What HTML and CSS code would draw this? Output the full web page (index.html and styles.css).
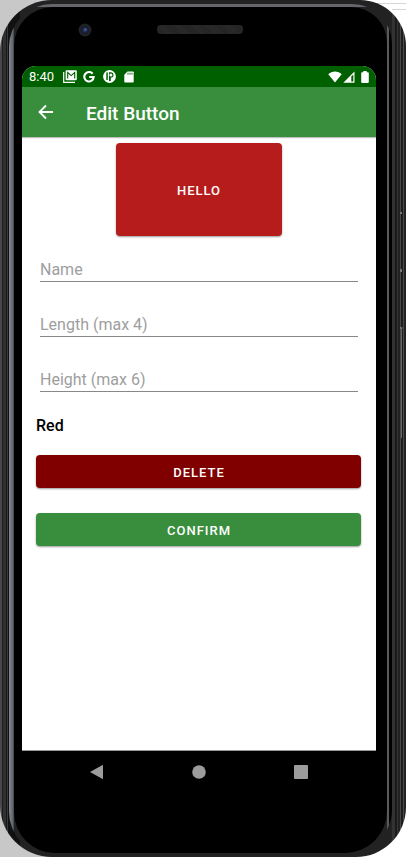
FILE: index.html
```html
<!DOCTYPE html>
<html lang="en">
<head>
<meta charset="utf-8">
<meta name="viewport" content="width=device-width, initial-scale=1">
<title>Edit Button</title>
<link rel="stylesheet" href="styles.css">
</head>
<body>
<div class="phone">
  <div class="rim">
    <div class="face">
      <div class="earpiece">
        <svg class="camera" viewBox="0 0 14 14" aria-hidden="true"><circle cx="7" cy="7" r="6.5" fill="#202226"/><circle cx="7" cy="7" r="4" fill="#161b30"/><circle cx="7" cy="7" r="2.5" fill="#26305c"/><circle cx="7.5" cy="6.5" r="1" fill="#5e6fae"/></svg>
        <span class="speaker"></span>
      </div>
      <div class="screen">
        <div class="status">
          <span class="clock">8:40</span>
          <svg class="gmail" viewBox="0 0 14 13" aria-hidden="true"><path d="M.700 2v10.300h11.300" fill="none" stroke="#fff" stroke-width="1.200"/><rect x="2.600" y="0.300" width="11.200" height="10" rx="1" fill="#fff"/><path d="M4.700 8.500V2.500L8.200 5.600 11.700 2.500v6" fill="none" stroke="#006000" stroke-width="1.100"/></svg>
          <svg class="google" viewBox="0 0 12 12" aria-hidden="true"><path d="M9.600 2.700A4.700 4.700 0 1 0 10.700 6H6.200" fill="none" stroke="#fff" stroke-width="2.100"/></svg>
          <svg class="pocket" viewBox="0 0 13 13" aria-hidden="true"><circle cx="6.500" cy="6.500" r="6.400" fill="#fff"/><path d="M3.300 2.500h1.500v7.500H3.300z" fill="#006000"/><path d="M6 2.300h1.800a2.700 2.700 0 0 1 0 5.400V11H6z" fill="#006000"/><circle cx="7.900" cy="5" r="1.500" fill="#fff"/></svg>
          <svg class="card-icon" viewBox="0 0 10 12" aria-hidden="true"><path d="M3.500.500H9a.7.7 0 0 1 .7.700v9.600a.7.7 0 0 1-.7.700H1a.7.7 0 0 1-.7-.7V3.700z" fill="#fff"/><path d="M4 1.700v2M6 1.700v2M8 1.700v2" stroke="#006000" stroke-width=".9"/></svg>
          <svg class="wifi" viewBox="0 0 14 12" aria-hidden="true"><path d="M.3 3.200C4-.5 10-.5 13.700 3.200L7 11.500z" fill="#fff"/></svg>
          <svg class="signal" viewBox="0 0 12 12" aria-hidden="true"><path d="M.3 11.700L11.500.500v11.200z" fill="#fff"/><path d="M8.300 5.500l2-2V10.500h-2z" fill="#006000"/></svg>
          <svg class="battery" viewBox="0 0 8 12" aria-hidden="true"><path d="M2.300 0h3.400v1.300H7a.8.8 0 0 1 .8.800v9a.8.8 0 0 1-.8.800H1a.8.8 0 0 1-.8-.8v-9a.8.8 0 0 1 .8-.8h1.300z" fill="#fff"/></svg>
        </div>
        <header class="toolbar">
          <button class="back" type="button" aria-label="Back"><svg viewBox="0 0 16 16" aria-hidden="true"><path d="M15 8H2M8 1.500L1.500 8 8 14.500" fill="none" stroke="#fff" stroke-width="1.800"/></svg></button>
          <h1>Edit Button</h1>
        </header>
        <main>
          <button class="btn preview" type="button">HELLO</button>
          <form>
            <input class="field" type="text" placeholder="Name" aria-label="Name">
            <input class="field" type="text" placeholder="Length (max 4)" aria-label="Length (max 4)">
            <input class="field" type="text" placeholder="Height (max 6)" aria-label="Height (max 6)">
            <p class="colour">Red</p>
            <button class="btn delete" type="button">DELETE</button>
            <button class="btn confirm" type="button">CONFIRM</button>
          </form>
        </main>
      </div>
      <nav class="navbar">
        <button type="button" aria-label="Back"><svg viewBox="0 0 14 16"><path d="M13 .800v14.400L0 8z" fill="#9c9c9c"/></svg></button>
        <button type="button" aria-label="Home"><svg viewBox="0 0 14 16"><circle cx="7" cy="8" r="6.800" fill="#9c9c9c"/></svg></button>
        <button type="button" aria-label="Recent apps"><svg viewBox="0 0 14 16"><rect y="1" width="14" height="14" rx="1" fill="#9c9c9c"/></svg></button>
      </nav>
    </div>
  </div>
</div>
</body>
</html>
```
FILE: styles.css
```css
* { box-sizing: border-box; }

body {
  margin: 0;
  font-family: Roboto, "Liberation Sans", sans-serif;
  background:
    linear-gradient(#d4d6dc, #d4d6dc) right 3px / 60px 1px no-repeat,
    linear-gradient(#d4d6dc, #d4d6dc) right 9px / 14px 1px no-repeat,
    linear-gradient(90deg, #c8c8c8 50%, #fff 50%);
}

button, input { font-family: inherit; }

.phone {
  display: flex;
  min-height: 100vh;
  padding: 4px 14px 2px 9px;
  border-radius: 52px 46px 50px 52px;
  background:
    linear-gradient(90deg, #8a8a8a, #333) right 3px top 327px / 3px 2px no-repeat,
    linear-gradient(#666, #666) right 4px top 328px / 1px 110px no-repeat,
    linear-gradient(#777, #777) right 4px top 212px / 2px 2px no-repeat,
    linear-gradient(#777, #777) right 4px top 269px / 2px 3px no-repeat,
    linear-gradient(90deg, #484848 2px, #1d1d1d 2px 3px, #303030 3px 6px, #171717 6px 7px, #3a3a3a 7px 8px, #111 8px 20px, transparent 20px),
    linear-gradient(270deg, #222 2px, #4a4a4a 2px 3px, #1d1d1d 3px 5px, #484848 5px 6px, #222 6px 8px, #363636 8px 9px, #1a1a1a 9px 11px, #333 11px 14px, transparent 14px),
    #222;
}

.rim {
  display: flex;
  flex: 1;
  padding: 3px 5px 0 5px;
  border-radius: 43px 40px 46px 43px;
  background:
    linear-gradient(90deg, #85888e, #5c646d 4px, #333940 5px, transparent 5px),
    linear-gradient(270deg, #000 3px, #585a60 3px 5px, transparent 5px),
    linear-gradient(#64666c 3px, #222 3px);
}

.face {
  display: flex;
  flex: 1;
  flex-direction: column;
  margin-bottom: 2px;
  padding: 0 11px 0 8px;
  border-radius: 39px 36px 42px 41px;
  background: #000;
}

.earpiece {
  display: grid;
  grid-template-columns: 1fr auto 1fr;
  align-items: center;
  height: 59px;
  padding-bottom: 14px;
}

.camera { width: 14px; margin-left: 56px; }

.speaker {
  width: 86px;
  height: 9px;
  margin-left: 2px;
  border-radius: 4px;
  background: repeating-linear-gradient(45deg, #222 0 1px, #2b2b2b 1px 2px);
}

.screen {
  display: flex;
  flex: 1;
  flex-direction: column;
  overflow: hidden;
  border-radius: 14px 14px 0 0;
  border-bottom: 1px solid #999;
  background: #fff;
}

.status {
  display: flex;
  align-items: center;
  height: 21px;
  padding: 0 7px;
  background: #006000;
  color: #fff;
}

.clock { font-size: 13px; line-height: 20px; }
.gmail { width: 14px; margin-left: 9px; }
.google { width: 12px; margin-left: 6px; }
.pocket { width: 13px; margin-left: 8px; }
.card-icon { width: 10px; margin-left: 8px; }
.wifi { width: 14px; margin-left: auto; }
.signal { width: 12px; margin-left: 1px; }
.battery { width: 8px; margin-left: 6px; }

.toolbar {
  display: flex;
  align-items: center;
  height: 50px;
  padding: 0 16px;
  background: #388e3c;
  box-shadow: 0 1px 1px rgba(0, 0, 0, .25);
  color: #fff;
}

.back {
  display: flex;
  width: 48px;
  padding: 0;
  border: 0;
  background: none;
}

.back svg { width: 16px; }

h1 {
  margin: 3px 0 0;
  font-size: 19px;
  font-weight: 500;
  line-height: 24px;
}

main { padding: 6px 15px 0 14px; }

form { display: flex; flex-direction: column; }

.btn {
  display: block;
  width: 100%;
  height: 33px;
  padding: 2px 0 0 1px;
  border: 0;
  border-radius: 4px;
  box-shadow: 0 1px 2px rgba(0, 0, 0, .4);
  color: #fff;
  font-size: 13px;
  font-weight: 500;
  letter-spacing: 1px;
}

.preview {
  width: 166px;
  height: 93px;
  margin: 0 auto 14px;
  background: #b71c1c;
}

.field {
  height: 32px;
  margin: 0 3px 23px 4px;
  padding: 7px 0 0;
  border: 0;
  border-bottom: 1px solid #888;
  border-radius: 0;
  outline: 0;
  background: none;
  color: #111;
  font-size: 16px;
}

.field::placeholder { color: #9e9e9e; opacity: 1; }

.colour {
  margin: 1px 0 19px;
  font-size: 16px;
  font-weight: 500;
  line-height: 20px;
  color: #000;
}

.delete { margin-bottom: 25px; background: #800000; }
.confirm { background: #388e3c; }

.navbar {
  display: grid;
  grid-template-columns: repeat(3, 102px);
  justify-content: center;
  height: 102px;
  padding-top: 13px;
}

.navbar button {
  display: flex;
  justify-content: center;
  align-items: flex-start;
  padding: 0;
  border: 0;
  background: none;
}

.navbar svg { width: 14px; }
```
